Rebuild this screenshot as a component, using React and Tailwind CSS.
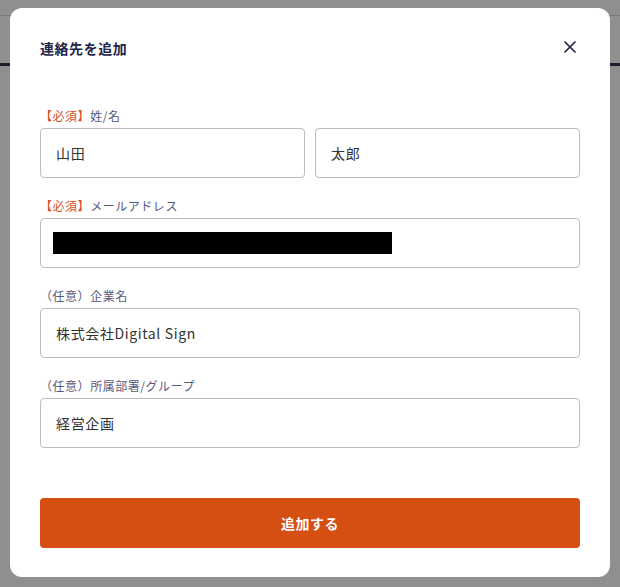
import { X } from "lucide-react";

const font = { fontFamily: '"Noto Sans CJK JP", "Noto Sans", sans-serif' };

function Field({ required, label, children }) {
  return (
    <div className="flex flex-col">
      <label className="text-[12px] leading-[16px] mb-[4px] text-[#565a7c] tracking-[0.045em]">
        {required ? (
          <span className="text-[#d5502a]">【必須】</span>
        ) : (
          <span>（任意）</span>
        )}
        {label}
      </label>
      {children}
    </div>
  );
}

function Input({ value, className = "" }) {
  return (
    <div
      className={
        "h-[50px] border border-[#bdbdbd] rounded-[4px] bg-white flex items-center px-[15px] text-[14px] text-[#333333] tracking-[0.045em] " +
        className
      }
    >
      {value}
    </div>
  );
}

export default function App() {
  return (
    <div className="relative w-full h-[587px] bg-[#8f8f8f] overflow-hidden" style={font}>
      {/* dimmed page behind */}
      <div className="h-[16px] border-b border-[#7a7a7a]" />
      <div className="h-[50px] border-b-[3px] border-[#1e1c2d]" />

      <div className="absolute left-[10px] top-[8px] w-[600px] h-[569px] bg-white rounded-[12px] px-[30px] pt-[30px] flex flex-col">
        <div className="flex items-center justify-between h-[20px]">
          <h2 className="text-[14px] font-bold text-[#23244a] leading-[20px] tracking-[0.04em]">連絡先を追加</h2>
          <button className="text-[#23244a] -mt-[2px]">
            <X size={20} strokeWidth={2.1} />
          </button>
        </div>

        <div className="mt-[50px] flex flex-col gap-[20px]">
          <Field required label="姓/名">
            <div className="flex gap-[10px]">
              <Input value="山田" className="flex-1" />
              <Input value="太郎" className="flex-1" />
            </div>
          </Field>
          <Field required label="メールアドレス">
            <Input
              value={<div className="w-[339px] h-[22px] bg-black -ml-[3px]" />}
            />
          </Field>
          <Field label="企業名">
            <Input value="株式会社Digital Sign" />
          </Field>
          <Field label="所属部署/グループ">
            <Input value="経営企画" />
          </Field>
        </div>

        <button className="mt-[50px] h-[50px] w-full rounded-[4px] bg-[#d54e12] text-white text-[14px] font-bold tracking-[0.04em]">
          追加する
        </button>
      </div>
    </div>
  );
}
